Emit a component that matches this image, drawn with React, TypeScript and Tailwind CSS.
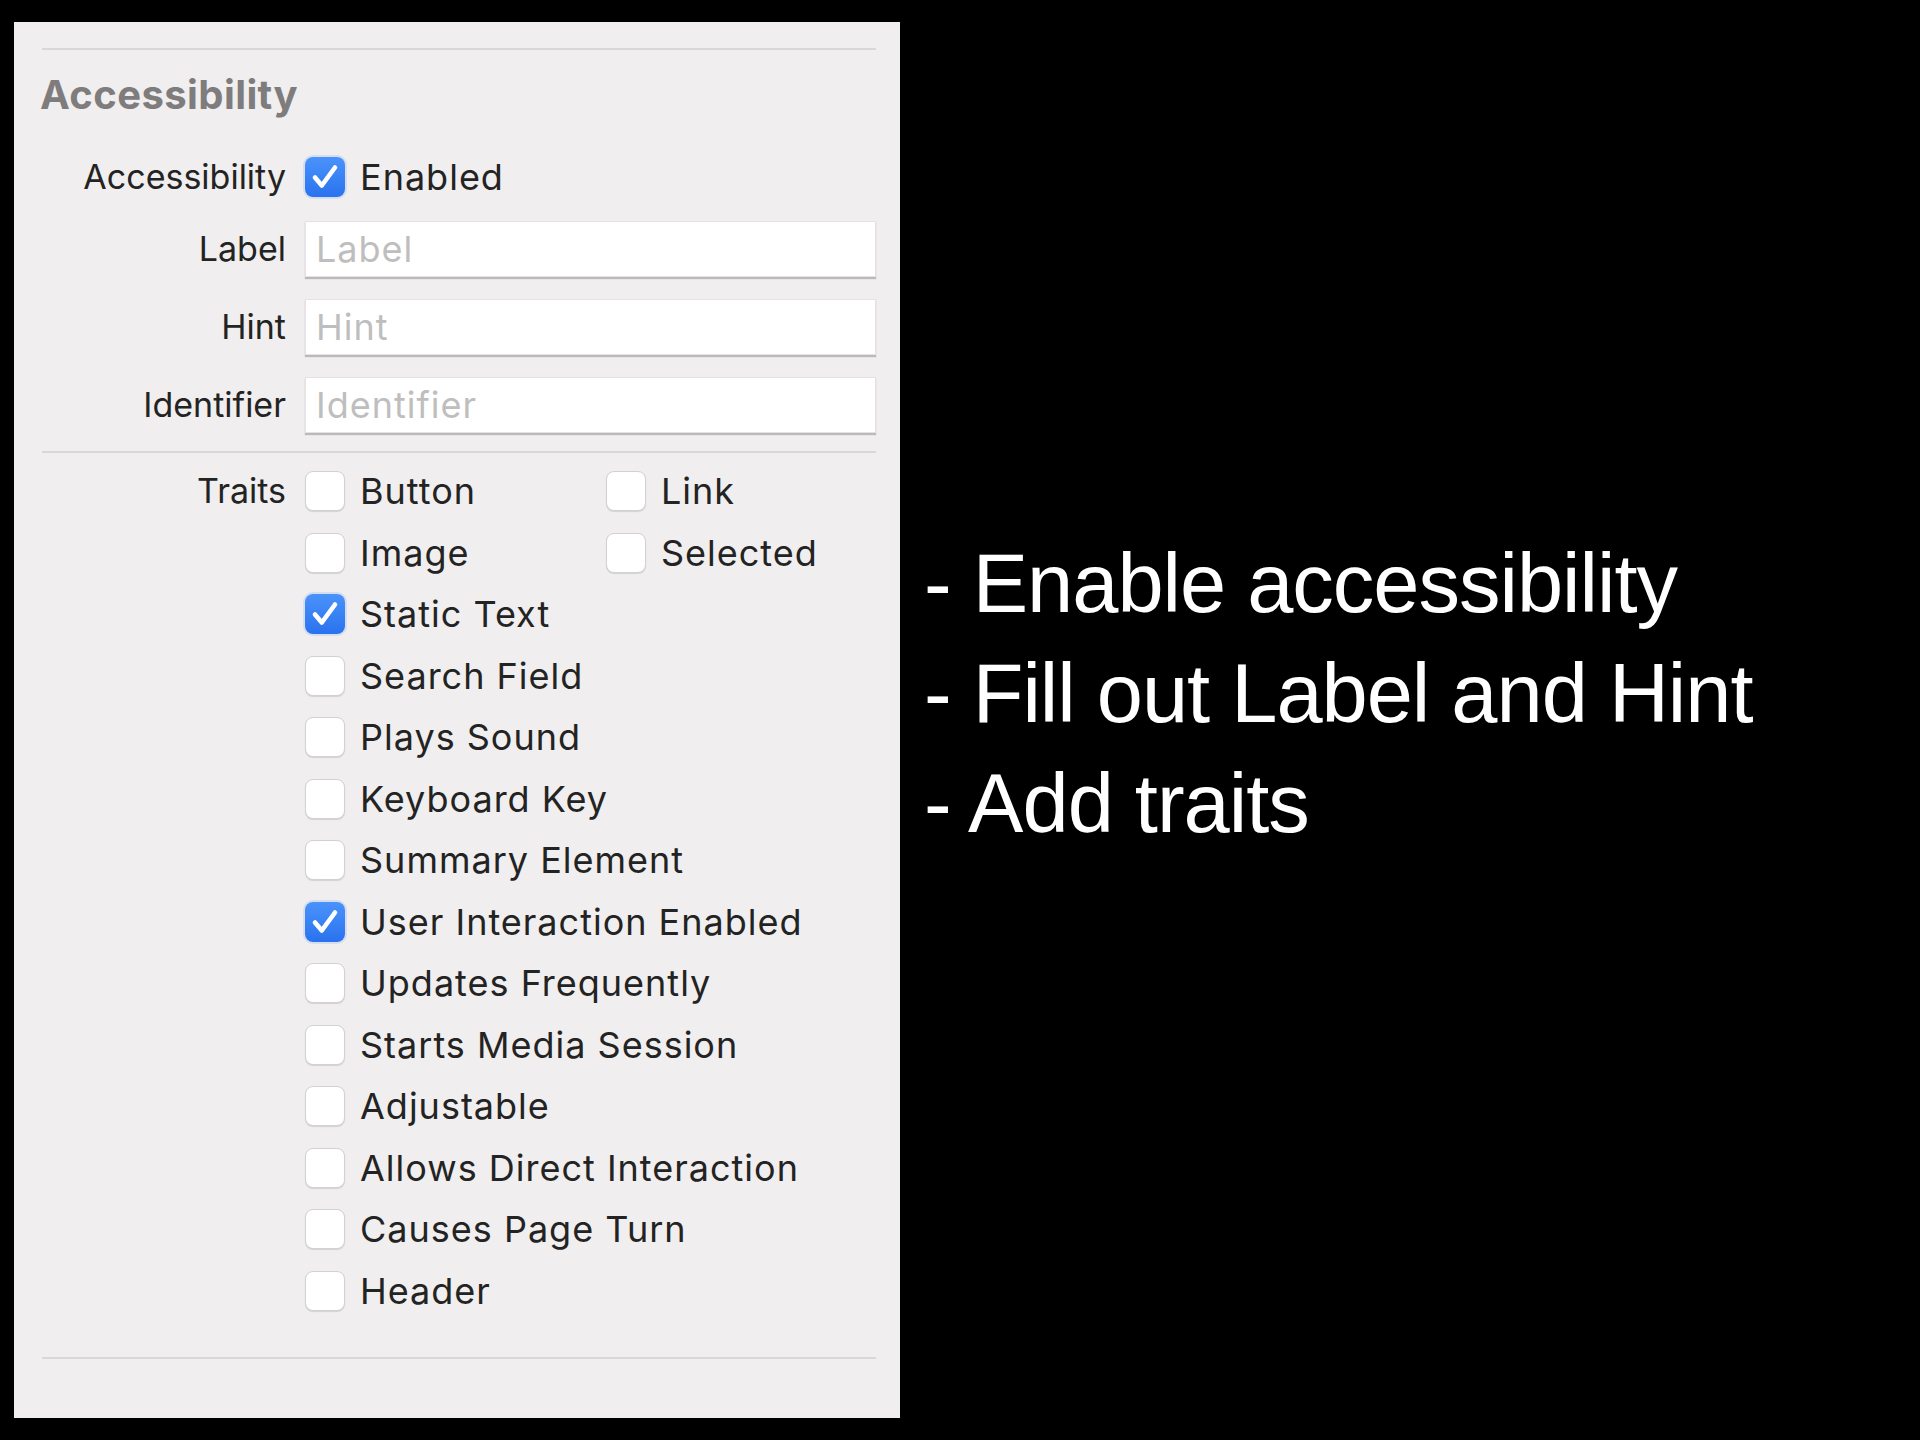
import React from "react";

interface CheckProps {
  checked?: boolean;
}

const Checkbox = ({ checked }: CheckProps) =>
  checked ? (
    <div className="w-[40px] h-[40px] shrink-0 rounded-[8px] bg-gradient-to-b from-[#4a93fb] to-[#2a72ee] shadow-[0_0_0_2px_rgba(90,150,250,0.18)] flex items-center justify-center">
      <svg viewBox="0 0 40 40" className="w-[40px] h-[40px]">
        <path
          d="M10 20.5 L16.8 28.5 L30 10.5"
          fill="none"
          stroke="#ffffff"
          strokeWidth="4.6"
          strokeLinecap="round"
          strokeLinejoin="round"
        />
      </svg>
    </div>
  ) : (
    <div className="w-[40px] h-[40px] shrink-0 rounded-[8px] bg-white border border-[#d3d1d1] shadow-[0_1px_1px_rgba(0,0,0,0.12)]" />
  );

const Trait = ({ label, checked }: { label: string; checked?: boolean }) => (
  <div className="flex items-center h-[40px]">
    <Checkbox checked={checked} />
    <span className="ml-[15px] text-[36px] leading-[40px] tracking-[1px] text-[#232323] whitespace-nowrap">
      {label}
    </span>
  </div>
);

const FormRow = ({ label, children }: { label: string; children: React.ReactNode }) => (
  <div className="flex items-center">
    <div className="w-[246px] shrink-0 text-right text-[34px] leading-[40px] text-[#232323] whitespace-nowrap">
      {label}
    </div>
    <div className="ml-[19px] flex-1">{children}</div>
  </div>
);

const Field = ({ placeholder }: { placeholder: string }) => (
  <div className="h-[56px] bg-white border border-[#e4e2e2] shadow-[0_2px_1px_rgba(0,0,0,0.22)] flex items-center pl-[10px] text-[36px] leading-[40px] tracking-[1px] text-[#bfbebe]">
    {placeholder}
  </div>
);

const traitRows: { label: string; checked?: boolean }[][] = [
  [{ label: "Button" }, { label: "Link" }],
  [{ label: "Image" }, { label: "Selected" }],
  [{ label: "Static Text", checked: true }],
  [{ label: "Search Field" }],
  [{ label: "Plays Sound" }],
  [{ label: "Keyboard Key" }],
  [{ label: "Summary Element" }],
  [{ label: "User Interaction Enabled", checked: true }],
  [{ label: "Updates Frequently" }],
  [{ label: "Starts Media Session" }],
  [{ label: "Adjustable" }],
  [{ label: "Allows Direct Interaction" }],
  [{ label: "Causes Page Turn" }],
  [{ label: "Header" }],
];

export default function App() {
  return (
    <div className="min-h-screen w-full bg-black flex items-start font-['Inter',sans-serif]">
      {/* Inspector panel */}
      <div className="ml-[14px] mt-[22px] w-[886px] h-[1396px] bg-[#f0eeee] pl-[26px] pr-[24px] pt-[26px]">
        <div className="ml-[2px] h-[2px] bg-[#d9d7d7]" />
        <h2 className="mt-[23px] text-[40px] leading-[44px] tracking-[0.4px] font-bold text-[#7e7c7c]">
          Accessibility
        </h2>

        <div className="mt-[40px]">
          <FormRow label="Accessibility">
            <div className="flex items-center h-[40px]">
              <Checkbox checked />
              <span className="ml-[15px] text-[36px] leading-[40px] tracking-[1px] text-[#232323]">
                Enabled
              </span>
            </div>
          </FormRow>
        </div>

        <div className="mt-[24px] flex flex-col gap-[22px]">
          <FormRow label="Label">
            <Field placeholder="Label" />
          </FormRow>
          <FormRow label="Hint">
            <Field placeholder="Hint" />
          </FormRow>
          <FormRow label="Identifier">
            <Field placeholder="Identifier" />
          </FormRow>
        </div>

        <div className="mt-[18px] ml-[2px] h-[2px] bg-[#d9d7d7]" />

        {/* Traits */}
        <div className="mt-[18px] flex">
          <div className="w-[246px] shrink-0 h-[40px] flex items-center justify-end text-[34px] leading-[40px] text-[#232323]">
            Traits
          </div>
          <div className="ml-[19px] flex flex-col gap-[21.5px]">
            {traitRows.map((row, i) => (
              <div key={i} className="grid grid-cols-[301px_1fr]">
                {row.map((t) => (
                  <Trait key={t.label} label={t.label} checked={t.checked} />
                ))}
              </div>
            ))}
          </div>
        </div>

        <div className="mt-[46px] ml-[2px] h-[2px] bg-[#d9d7d7]" />
      </div>

      {/* Notes */}
      <div className="ml-[24px] mt-[529px] font-['Liberation_Sans',Arial,sans-serif] text-white text-[83px] leading-[110px] tracking-[-1px] whitespace-nowrap">
        <p>- Enable accessibility</p>
        <p>- Fill out Label and Hint</p>
        <p>- Add traits</p>
      </div>
    </div>
  );
}
